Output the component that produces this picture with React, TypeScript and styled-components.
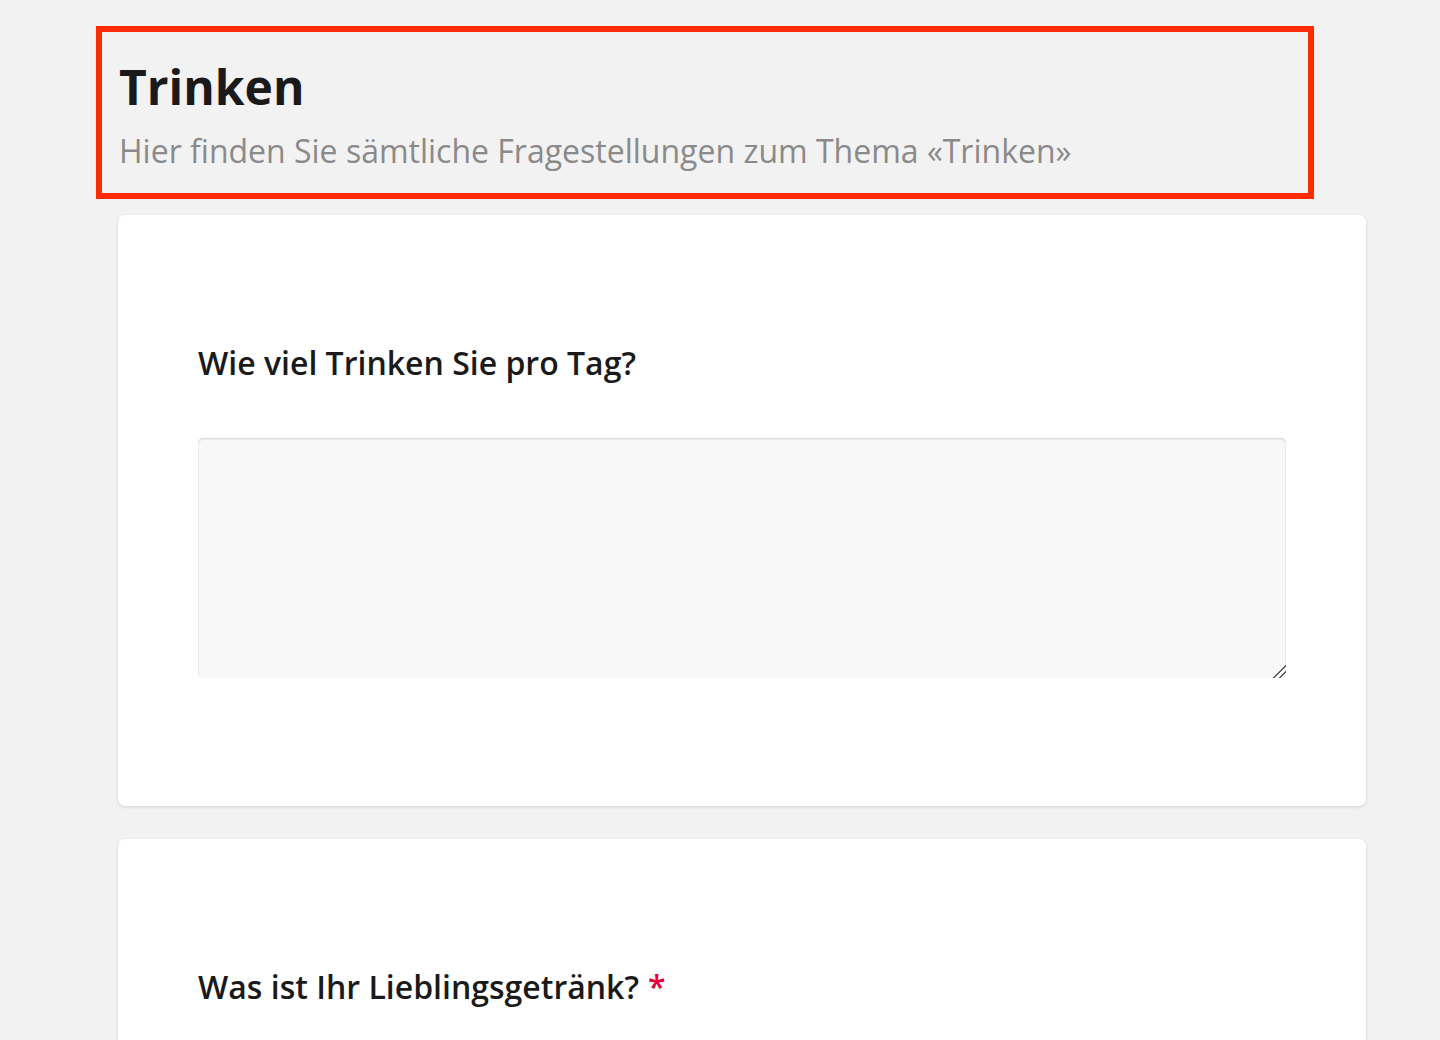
import React from "react";
import styled, { createGlobalStyle } from "styled-components";

const Global = createGlobalStyle`
  html, body { margin: 0; padding: 0; background: #f2f2f2; }
  body { font-family: "Open Sans", "Noto Sans", sans-serif; color: #1a1a1a; }
  * { box-sizing: border-box; }
`;

const Page = styled.div`
  display: flex;
  flex-direction: column;
  padding: 26px 0 40px 0;
`;

const Header = styled.header`
  margin-left: 96px;
  width: 1218px;
  height: 173px;
  border: 6px solid #ff2a00;
  padding: 26px 17px 0 17px;
  display: flex;
  flex-direction: column;
`;

const Title = styled.h1`
  margin: 0;
  font-size: 48px;
  font-weight: 700;
  line-height: 58px;
  color: #1a1a1a;
`;

const Subtitle = styled.p`
  margin: 15px 0 0 0;
  font-size: 32px;
  font-weight: 400;
  line-height: 40px;
  color: #8a8a8a;
`;

const Cards = styled.div`
  margin: 16px 0 0 118px;
  width: 1248px;
  display: flex;
  flex-direction: column;
  gap: 33px;
`;

const Card = styled.section`
  background: #fff;
  border-radius: 7px;
  box-shadow: 0 1px 3px rgba(0, 0, 0, 0.14);
  padding: 124px 80px 128px 80px;
  display: flex;
  flex-direction: column;
  gap: 51px;
`;

const Question = styled.h2`
  margin: 0;
  font-size: 32px;
  font-weight: 600;
  line-height: 48px;
  color: #1a1a1a;
`;

const Required = styled.span`
  color: #e4003a;
  margin-left: 9px;
`;

const Answer = styled.textarea`
  display: block;
  width: 1088px;
  height: 240px;
  background: #f8f8f8;
  border: none;
  border-radius: 5px;
  box-shadow: inset 0 1px 2px rgba(0, 0, 0, 0.18);
  resize: both;
  font-family: inherit;
  font-size: 20px;
  padding: 12px 16px;
  outline: none;

  &::-webkit-resizer {
    background: linear-gradient(
      135deg,
      transparent 0 54%,
      #5a5a5a 54% 61%,
      transparent 61% 76%,
      #5a5a5a 76% 83%,
      transparent 83%
    );
  }
`;

export default function App() {
  return (
    <>
      <Global />
      <Page>
        <Header>
          <Title>Trinken</Title>
          <Subtitle>Hier finden Sie sämtliche Fragestellungen zum Thema «Trinken»</Subtitle>
        </Header>
        <Cards>
          <Card>
            <Question>Wie viel Trinken Sie pro Tag?</Question>
            <Answer aria-label="Wie viel Trinken Sie pro Tag?" />
          </Card>
          <Card>
            <Question>
              Was ist Ihr Lieblingsgetränk?<Required>*</Required>
            </Question>
            <Answer aria-label="Was ist Ihr Lieblingsgetränk?" />
          </Card>
        </Cards>
      </Page>
    </>
  );
}
